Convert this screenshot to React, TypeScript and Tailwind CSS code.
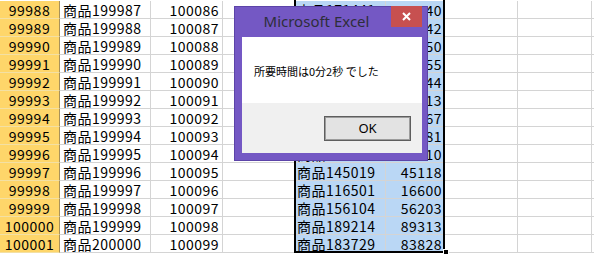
import React from "react";

type Row = { a: number; b: string; c: number; e: string; f: number };

const rows: Row[] = [
  { a: 99988, b: "商品199987", c: 100086, e: "商品171441", f: 71540 },
  { a: 99989, b: "商品199988", c: 100087, e: "商品125243", f: 25342 },
  { a: 99990, b: "商品199989", c: 100088, e: "商品164751", f: 64850 },
  { a: 99991, b: "商品199990", c: 100089, e: "商品138156", f: 38255 },
  { a: 99992, b: "商品199991", c: 100090, e: "商品190045", f: 90144 },
  { a: 99993, b: "商品199992", c: 100091, e: "商品112214", f: 12113 },
  { a: 99994, b: "商品199993", c: 100092, e: "商品156968", f: 57067 },
  { a: 99995, b: "商品199994", c: 100093, e: "商品146882", f: 46981 },
  { a: 99996, b: "商品199995", c: 100094, e: "商品183111", f: 83210 },
  { a: 99997, b: "商品199996", c: 100095, e: "商品145019", f: 45118 },
  { a: 99998, b: "商品199997", c: 100096, e: "商品116501", f: 16600 },
  { a: 99999, b: "商品199998", c: 100097, e: "商品156104", f: 56203 },
  { a: 100000, b: "商品199999", c: 100098, e: "商品189214", f: 89313 },
  { a: 100001, b: "商品200000", c: 100099, e: "商品183729", f: 83828 },
];

const cell = "h-full shrink-0 border-b border-r border-[#d4d4d4] leading-[19px] whitespace-nowrap";

export default function App() {
  return (
    <div
      className="relative w-[594px] h-[254px] overflow-hidden bg-white pt-px text-[14px] tracking-[0.5px] text-black"
      style={{ fontFamily: '"Noto Sans CJK JP", "Noto Sans", sans-serif' }}
    >
      {/* sheet */}
      {rows.map((r) => (
        <div key={r.a} className="flex h-[18px]">
          <div className="h-full w-[60px] shrink-0 border-b border-r border-b-[#f3e0a4] border-r-[#a8925a] bg-[#fed66a] text-center leading-[19px]">
            {r.a}
          </div>
          <div className={`${cell} w-[91px] pl-[3px]`}>{r.b}</div>
          <div className={`${cell} w-[72px] pr-[3px] text-right`}>{r.c}</div>
          <div className={`${cell} w-[72px]`} />
          <div className={`${cell} w-[91px] border-[#d3dbe4] bg-[#bad7f5] pl-[2px]`}>{r.e}</div>
          <div className={`${cell} w-[59px] border-[#d3dbe4] bg-[#bad7f5] pr-[2px] text-right`}>{r.f}</div>
          <div className={`${cell} w-[73px]`} />
          <div className={`${cell} w-[74px]`} />
          <div className={`${cell} w-[40px]`} />
        </div>
      ))}

      {/* selection frame */}
      <div className="pointer-events-none absolute left-[294px] top-[-3px] h-[256px] w-[151px] border-2 border-black" />
      <div className="absolute left-[443px] top-[249px] h-[6px] w-[6px] border border-white bg-black" />

      {/* message box */}
      <div className="absolute left-[234px] top-[6px] flex h-[155px] w-[194px] flex-col border border-[#5c44a8] bg-[#7458c4] tracking-normal">
        <div className="flex h-[30px] pl-[7px] pr-[5px]">
          <span
            className="flex-1 text-center text-[15px] leading-[28px] text-[#2e2e3a]"
            style={{ fontFamily: '"Noto Sans", "Open Sans", sans-serif' }}
          >
            Microsoft Excel
          </span>
          <button className="-mt-px flex h-[21px] w-[31px] items-center justify-center bg-[#c75050]">
            <svg width="9" height="9" viewBox="0 0 9 9">
              <path d="M1 1 L8 8 M8 1 L1 8" stroke="white" strokeWidth="2" />
            </svg>
          </button>
        </div>
        <div className="ml-[7px] mr-[5px] flex flex-col">
          <div className="flex h-[66px] items-center bg-white pl-[12px] pt-[2px] text-[11px]">
            所要時間は0分2秒 でした
          </div>
          <div className="flex h-[50px] justify-end bg-[#f0f0f0] pr-[11px] pt-[13px]">
            <button
              className="h-[25px] w-[87px] border border-[#5e5e5e] bg-[#e3e3e3] text-[13px] shadow-[inset_0_0_0_1px_#9c9c9c]"
              style={{ fontFamily: '"Noto Sans", "Open Sans", sans-serif' }}
            >
              OK
            </button>
          </div>
        </div>
      </div>
    </div>
  );
}
